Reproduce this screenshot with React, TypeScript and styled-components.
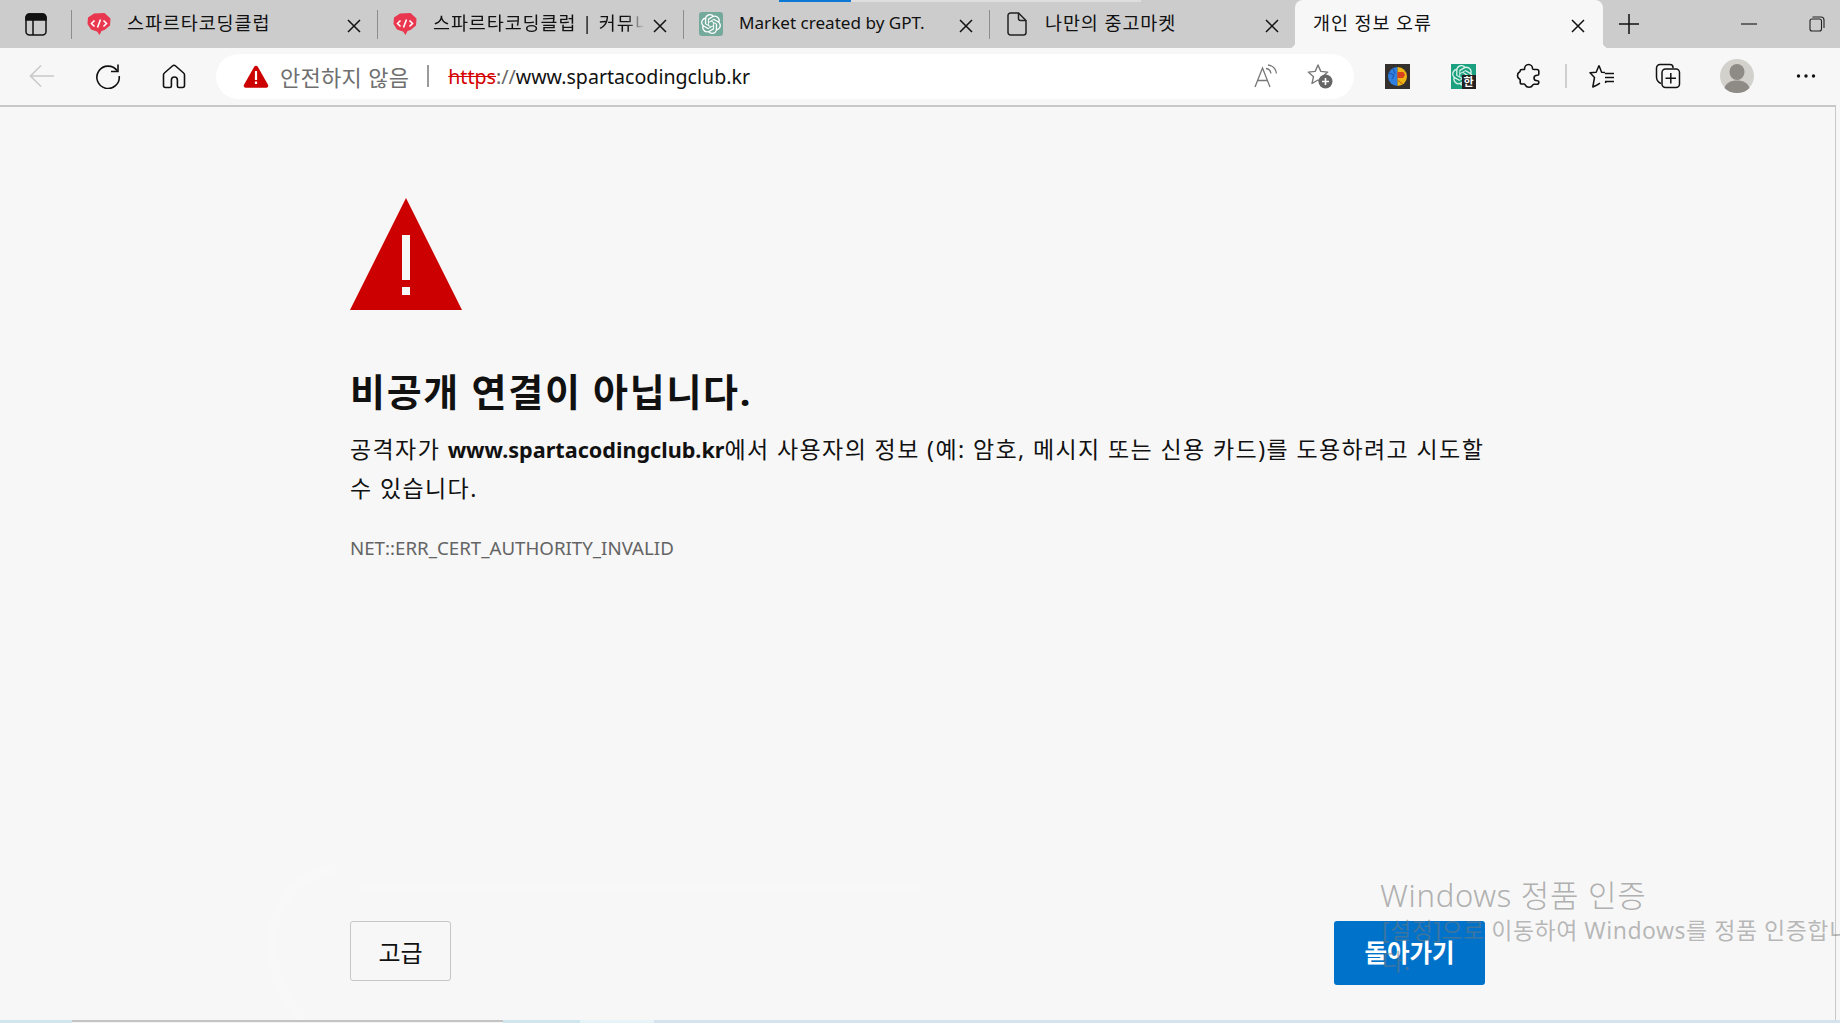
import styled, { createGlobalStyle } from 'styled-components';
import { SiOpenai } from 'react-icons/si';

const FONT = `"Noto Sans", "Noto Sans CJK KR", sans-serif`;

const GlobalStyle = createGlobalStyle`
    html, body {
        margin: 0;
        padding: 0;
        background: #f7f7f7;
    }
    * {
        box-sizing: border-box;
    }
`;

function CloseIcon() {
    return (
        <svg width="14" height="14" viewBox="0 0 14 14" fill="none" stroke="#111" strokeWidth="1.5">
            <path d="M1 1l12 12M13 1L1 13" />
        </svg>
    );
}

function SpartaIcon() {
    return (
        <svg width="26" height="24" viewBox="0 0 26 24">
            <path d="M8 1.5L18.500 1l6 5.500-.5 7-5.500 4.500-3 1-2 4-2.500-3.500-6-2L1.500 12 2 5.500z" fill="#e8374f" />
            <path d="M8.500 8.500l-3 3 3 3M17.500 8.500l3 3-3 3M14.500 7.500l-3 8" fill="none" stroke="#fff" strokeWidth="1.600" />
        </svg>
    );
}

function DocIcon() {
    return (
        <svg width="20" height="24" viewBox="0 0 20 24" fill="none" stroke="#222" strokeWidth="1.500">
            <path d="M3.500 1h8L19 8.500V20.500a2.500 2.500 0 0 1-2.500 2.500h-13A2.500 2.500 0 0 1 1 20.500v-17A2.500 2.500 0 0 1 3.500 1z" />
            <path d="M11.500 1v5.500a2 2 0 0 0 2 2H19" />
        </svg>
    );
}

function SidebarIcon() {
    return (
        <svg width="22" height="23" viewBox="0 0 22 23" fill="none" stroke="#111" strokeWidth="1.500">
            <rect x="1" y="1" width="20" height="21" rx="3.500" />
            <path d="M1 4.500a3.500 3.500 0 0 1 3.500-3.500h13A3.500 3.500 0 0 1 21 4.500V7H1z" fill="#111" />
            <path d="M8 7v15" />
        </svg>
    );
}

function PlusIcon() {
    return (
        <svg width="22" height="22" viewBox="0 0 22 22" fill="none" stroke="#111" strokeWidth="1.500">
            <path d="M11 1v20M1 11h20" />
        </svg>
    );
}

function MinimizeIcon() {
    return (
        <svg width="16" height="2" viewBox="0 0 16 2" fill="none" stroke="#222" strokeWidth="1.200">
            <path d="M0 1h16" />
        </svg>
    );
}

function RestoreIcon() {
    return (
        <svg width="16" height="16" viewBox="0 0 16 16" fill="none" stroke="#222" strokeWidth="1.100">
            <rect x="1" y="3" width="11.500" height="12" rx="2" />
            <path d="M3.500 1h8.500a3 3 0 0 1 3 3v8" />
        </svg>
    );
}

function BackIcon() {
    return (
        <svg width="26" height="24" viewBox="0 0 26 24" fill="none" stroke="#c9c9c9" strokeWidth="1.600">
            <path d="M25 12H2M12 1.500L1.500 12 12 22.500" />
        </svg>
    );
}

function ReloadIcon() {
    return (
        <svg width="26" height="26" viewBox="0 0 26 26" fill="none" stroke="#111" strokeWidth="1.600">
            <path d="M22.200 7.800A11.200 11.200 0 1 0 24.200 13" />
            <path d="M23 1.500V8.500H16" />
        </svg>
    );
}

function HomeIcon() {
    return (
        <svg width="24" height="25" viewBox="0 0 24 25" fill="none" stroke="#111" strokeWidth="1.600">
            <path d="M10.400 2a2.400 2.400 0 0 1 3.200 0l8 7a2.500 2.500 0 0 1 .9 1.900V21.500a2 2 0 0 1-2 2h-3.600a1.500 1.500 0 0 1-1.500-1.500v-6a3 3 0 0 0-6 0v6a1.500 1.500 0 0 1-1.500 1.500H3.500a2 2 0 0 1-2-2V10.900A2.500 2.500 0 0 1 2.400 9z" />
        </svg>
    );
}

function WarnIconSmall() {
    return (
        <svg width="26" height="23" viewBox="0 0 26 23">
            <path d="M11.200 1.800a2 2 0 0 1 3.600 0l10.200 18a2 2 0 0 1-1.800 3H2.800a2 2 0 0 1-1.800-3z" fill="#cc0000" />
            <path d="M11.900 6h2.200v9h-2.200zM11.900 16.500h2.200v2.500h-2.200z" fill="#fff" />
        </svg>
    );
}

function ReadAloudIcon() {
    return (
        <svg width="24" height="24" viewBox="0 0 24 24" fill="none" stroke="#777" strokeWidth="1.300">
            <path d="M1 23L8.500 4 16 23M3.500 16.500h10" />
            <path d="M12 4.500c2.500.3 4.600 2.200 5 5M14 1c4.500.5 7.800 3.800 8.500 8.500" />
        </svg>
    );
}

function StarPlusIcon() {
    return (
        <svg width="26" height="26" viewBox="0 0 26 26">
            <path d="M11 2l2.800 6.400 6.900.7-5.200 4.600 1.500 6.800-6-3.500-6 3.500 1.500-6.800L1.300 9.100l6.900-.7z" fill="none" stroke="#777" strokeWidth="1.400" strokeLinejoin="round" />
            <circle cx="18.500" cy="18.500" r="7" fill="#666" />
            <path d="M18.500 15v7M15 18.500h7" stroke="#fff" strokeWidth="1.600" />
        </svg>
    );
}

function BrainIcon() {
    return (
        <svg width="25" height="25" viewBox="0 0 25 25">
            <rect width="25" height="25" fill="#34302e" />
            <path d="M12.500 3a9.500 9.500 0 0 0 0 19z" fill="#2f7fe0" />
            <path d="M12.500 3a9.500 9.500 0 0 1 0 19z" fill="#f0b415" />
            <path d="M12.500 8h6l1.500 3-2 3h-5.500z" fill="#d9421f" />
            <path d="M4 9l5 2-2 4M8 4.500l2 5" fill="none" stroke="#1c4fa8" strokeWidth="1" />
            <path d="M12.500 16l5 4" stroke="#c87412" strokeWidth="1.200" />
        </svg>
    );
}

function PuzzleIcon() {
    return (
        <svg width="26" height="26" viewBox="0 0 26 26" fill="none" stroke="#111" strokeWidth="1.600" strokeLinejoin="round">
            <path d="M8.500 6.500C8.500 3.500 10 1.500 12.500 1.500s4 2 4 4c0 .6 1 1 1.500 1h3c1 0 1.800.8 1.800 1.800v3c0 .7-.8 1-1.500 1-1.800 0-3.300 1-3.300 2.700s1.500 2.700 3.300 2.700c.7 0 1.500.3 1.500 1v.5c0 1-.8 2-1.800 2H18c-.7 0-1.200.5-1.500 1.200-.5 1.200-2 1.800-3.500 1.800s-3-.6-3.500-1.800C9.200 21.500 8.700 21 8 21H6c-1 0-1.800-.8-1.800-1.800V17c0-.6-.5-1-1-1.300C2 15 1.500 14 1.500 12.500S2 10 3.200 9.300c.5-.3 1-.7 1-1.300 0-1 .8-1.500 1.800-1.500z" />
        </svg>
    );
}

function FavoritesIcon() {
    return (
        <svg width="26" height="25" viewBox="0 0 26 25" fill="none" stroke="#111" strokeWidth="1.500" strokeLinejoin="round">
            <path d="M10 1.500l2.600 6.700 3.400.3M8 21l-4.200 2 1.700-9.500L1 8.800l6.200-.6L10 1.500" />
            <path d="M16.500 17.500l.3 1.500M8 21l3-1.800" />
            <path d="M16 9.500h9M16 13.500h9M16 17.500h9" />
        </svg>
    );
}

function CollectionsIcon() {
    return (
        <svg width="26" height="26" viewBox="0 0 26 26" fill="none" stroke="#111" strokeWidth="1.500">
            <path d="M18 5V4.500A3 3 0 0 0 15 1.500H5A3.500 3.500 0 0 0 1.500 5v9a7 7 0 0 0 4.500 6.500" />
            <rect x="7" y="6" width="17.500" height="18.500" rx="3.500" />
            <path d="M15.800 10v10.500M10.500 15.200h10.500" />
        </svg>
    );
}

function AvatarIcon() {
    return (
        <svg width="34" height="34" viewBox="0 0 34 34">
            <circle cx="17" cy="17" r="17" fill="#d3d1cc" />
            <ellipse cx="17" cy="13" rx="7.500" ry="8" fill="#8e8a85" />
            <path d="M4.500 29c1.500-5 6-7.500 12.500-7.500S28 24 29.500 29A17 17 0 0 1 17 34 17 17 0 0 1 4.500 29z" fill="#8e8a85" />
        </svg>
    );
}

function MoreIcon() {
    return (
        <svg width="20" height="4" viewBox="0 0 20 4" fill="#111">
            <circle cx="2.500" cy="2" r="1.700" />
            <circle cx="10" cy="2" r="1.700" />
            <circle cx="17.500" cy="2" r="1.700" />
        </svg>
    );
}

function BigWarning() {
    return (
        <svg width="112" height="112" viewBox="0 0 112 112">
            <path d="M56 0l56 112H0z" fill="#cc0000" />
            <path d="M52 37h8v45h-8zM52 89h8v8h-8z" fill="#f7f7f7" />
        </svg>
    );
}

export default function App() {
    return (
        <>
            <GlobalStyle />
            <Screen>
                <TabStrip>
                    <LoadingTrack>
                        <LoadingBar />
                    </LoadingTrack>
                    <SideSlot>
                        <SidebarIcon />
                    </SideSlot>
                    <Separator />
                    <Tab>
                        <FaviconBox><SpartaIcon /></FaviconBox>
                        <TabTitle>스파르타코딩클럽</TabTitle>
                        <CloseBox><CloseIcon /></CloseBox>
                    </Tab>
                    <Separator />
                    <Tab>
                        <FaviconBox><SpartaIcon /></FaviconBox>
                        <TabTitle $fade>스파르타코딩클럽 | 커뮤니티</TabTitle>
                        <CloseBox><CloseIcon /></CloseBox>
                    </Tab>
                    <Separator />
                    <Tab>
                        <FaviconBox>
                            <GptFavicon><SiOpenai size={20} color="#fff" /></GptFavicon>
                        </FaviconBox>
                        <TabTitle $latin>Market created by GPT.</TabTitle>
                        <CloseBox><CloseIcon /></CloseBox>
                    </Tab>
                    <Separator />
                    <Tab>
                        <FaviconBox><DocIcon /></FaviconBox>
                        <TabTitle>나만의 중고마켓</TabTitle>
                        <CloseBox><CloseIcon /></CloseBox>
                    </Tab>
                    <ActiveTab>
                        <TabTitle>개인 정보 오류</TabTitle>
                        <CloseBox><CloseIcon /></CloseBox>
                    </ActiveTab>
                    <NewTabSlot><PlusIcon /></NewTabSlot>
                    <WindowControls>
                        <MinimizeIcon />
                        <RestoreIcon />
                    </WindowControls>
                </TabStrip>

                <Toolbar>
                    <ToolGroup>
                        <ToolButton><BackIcon /></ToolButton>
                        <ToolButton><ReloadIcon /></ToolButton>
                        <ToolButton><HomeIcon /></ToolButton>
                    </ToolGroup>
                    <AddressBar>
                        <WarnIconSmall />
                        <NotSecure>안전하지 않음</NotSecure>
                        <AddressDivider />
                        <Url>
                            <Scheme>https</Scheme>
                            <SchemeRest>://</SchemeRest>
                            www.spartacodingclub.kr
                        </Url>
                        <AddressActions>
                            <ReadAloudIcon />
                            <StarPlusIcon />
                        </AddressActions>
                    </AddressBar>
                    <ExtensionGroup>
                        <ToolButton><BrainIcon /></ToolButton>
                        <ToolButton>
                            <GptExtension>
                                <SiOpenai size={21} color="#d8f2e8" />
                                <HanBadge>한</HanBadge>
                            </GptExtension>
                        </ToolButton>
                        <ToolButton><PuzzleIcon /></ToolButton>
                    </ExtensionGroup>
                    <ToolDivider />
                    <ToolGroup>
                        <ToolButton><FavoritesIcon /></ToolButton>
                        <ToolButton><CollectionsIcon /></ToolButton>
                        <ToolButton $width={62}><AvatarIcon /></ToolButton>
                        <ToolButton><MoreIcon /></ToolButton>
                    </ToolGroup>
                </Toolbar>

                <Content>
                    <FaintShape viewBox="0 0 1840 160" fill="none" stroke="#f8f8f8" strokeWidth="10">
                        <path d="M335 8C292 18 272 48 272 84c0 30 12 56 32 76" />
                        <path d="M360 28h560" />
                    </FaintShape>
                    <BigWarning />
                    <Heading>비공개 연결이 아닙니다.</Heading>
                    <Message>
                        공격자가 <strong>www.spartacodingclub.kr</strong>에서 사용자의 정보 (예: 암호, 메시지 또는 신용 카드)를 도용하려고 시도할 수 있습니다.
                    </Message>
                    <ErrorCode>NET::ERR_CERT_AUTHORITY_INVALID</ErrorCode>
                    <ButtonRow>
                        <AdvancedButton>고급</AdvancedButton>
                        <BackButton>돌아가기</BackButton>
                    </ButtonRow>
                    <Watermark>
                        <WatermarkTitle>Windows 정품 인증</WatermarkTitle>
                        <WatermarkText>
                            [설정]으로 이동하여 Windows를 정품 인증합니다.
                        </WatermarkText>
                    </Watermark>
                </Content>

                <Taskbar>
                    <TaskSegment $width={72} />
                    <TaskSegment $width={431} $color="#f4f4f4" $edge />
                    <TaskSegment $width={77} />
                    <TaskSegment $width={74} $color="#e6f3f7" />
                    <TaskSegment $color="#d5e3f0" $grow />
                </Taskbar>
            </Screen>
        </>
    );
}

const Screen = styled.div`
    width: 1840px;
    height: 1023px;
    display: flex;
    flex-direction: column;
    overflow: hidden;
    background: #f7f7f7;
    font-family: ${FONT};
    color: #111;
`;

const TabStrip = styled.div`
    position: relative;
    height: 48px;
    flex: none;
    display: flex;
    align-items: center;
    background: #cccccc;
`;

const LoadingTrack = styled.div`
    position: absolute;
    top: 0;
    left: 779px;
    width: 362px;
    height: 2px;
    background: #dedede;
`;

const LoadingBar = styled.div`
    width: 72px;
    height: 100%;
    background: #0a78d4;
`;

const SideSlot = styled.div`
    width: 71px;
    padding-left: 25px;
    display: flex;
    align-items: center;
`;

const Separator = styled.div`
    width: 1px;
    height: 29px;
    flex: none;
    background: #8d8d8d;
`;

const Tab = styled.div`
    width: 305px;
    height: 100%;
    flex: none;
    display: flex;
    align-items: center;
    padding: 0 13px 0 14px;
`;

const ActiveTab = styled(Tab)`
    position: relative;
    width: 308px;
    padding: 0 15px 0 18px;
    background: #f7f7f7;
    border-radius: 8px 8px 0 0;

    &::before,
    &::after {
        content: '';
        position: absolute;
        bottom: 0;
        width: 6px;
        height: 6px;
    }
    &::before {
        left: -6px;
        background: radial-gradient(circle at 0 0, #cccccc 6px, #f7f7f7 6.5px);
    }
    &::after {
        right: -6px;
        background: radial-gradient(circle at 100% 0, #cccccc 6px, #f7f7f7 6.5px);
    }
`;

const FaviconBox = styled.div`
    width: 26px;
    height: 26px;
    flex: none;
    margin-right: 15px;
    display: flex;
    align-items: center;
    justify-content: center;
`;

const GptFavicon = styled.div`
    width: 24px;
    height: 24px;
    display: flex;
    align-items: center;
    justify-content: center;
    background: #74aa9c;
    border-radius: 3px;
`;

const TabTitle = styled.span<{ $fade?: boolean; $latin?: boolean }>`
    flex: 1;
    min-width: 0;
    margin-top: -2px;
    font-size: ${props => (props.$latin ? '17.1px' : '18.5px')};
    letter-spacing: ${props => (props.$latin ? '0' : '0.9px')};
    line-height: 24px;
    white-space: nowrap;
    overflow: hidden;
    color: #111;
    ${props => props.$fade && 'mask-image: linear-gradient(to right, #000 92%, transparent 100%);'}
`;

const CloseBox = styled.div`
    width: 20px;
    flex: none;
    margin-left: 6px;
    padding-top: 3px;
    display: flex;
    align-items: center;
    justify-content: center;
`;

const NewTabSlot = styled.div`
    width: 50px;
    padding-left: 15px;
    display: flex;
    align-items: center;
`;

const WindowControls = styled.div`
    margin-left: 88px;
    width: 84px;
    display: flex;
    align-items: center;
    justify-content: space-between;
`;

const Toolbar = styled.div`
    height: 57px;
    flex: none;
    display: flex;
    align-items: center;
    padding: 0 0 1px 14px;
    background: #f7f7f7;
`;

const ToolGroup = styled.div`
    display: flex;
    gap: 10px;
`;

const ExtensionGroup = styled(ToolGroup)`
    margin-left: 15px;
`;

const ToolButton = styled.div<{ $width?: number }>`
    width: ${props => props.$width ?? 56}px;
    height: 44px;
    flex: none;
    display: flex;
    align-items: center;
    justify-content: center;
`;

const AddressBar = styled.div`
    width: 1138px;
    height: 45px;
    margin-left: 14px;
    padding: 0 21px 0 27px;
    flex: none;
    display: flex;
    align-items: center;
    background: #fff;
    border-radius: 23px;
`;

const NotSecure = styled.span`
    margin-left: 11px;
    font-size: 22px;
    letter-spacing: 0.3px;
    color: #6f6f6f;
    white-space: nowrap;
`;

const AddressDivider = styled.div`
    width: 2px;
    height: 22px;
    margin: 0 19px 0 18px;
    background: #9a9a9a;
`;

const Url = styled.span`
    flex: 1;
    font-size: 19.6px;
    white-space: nowrap;
    color: #111;
`;

const Scheme = styled.span`
    color: #d40000;
    text-decoration: line-through;
`;

const SchemeRest = styled.span`
    color: #666;
`;

const AddressActions = styled.div`
    display: flex;
    align-items: center;
    gap: 29px;
`;

const GptExtension = styled.div`
    position: relative;
    width: 25px;
    height: 25px;
    display: flex;
    padding: 1px;
    background: #1ba17f;
`;

const HanBadge = styled.span`
    position: absolute;
    right: 0;
    bottom: 0;
    width: 14px;
    height: 14px;
    background: #222;
    color: #fff;
    font-size: 11px;
    font-weight: 700;
    line-height: 14px;
    text-align: center;
`;

const ToolDivider = styled.div`
    width: 2px;
    height: 24px;
    flex: none;
    margin: 0 7px 0 8px;
    background: #cfcfcf;
`;

const Content = styled.main`
    position: relative;
    flex: 1;
    min-height: 0;
    margin-right: 4px;
    padding: 91px 350px 35px 350px;
    display: flex;
    flex-direction: column;
    background: #f7f7f7;
    border-top: 2px solid #c8c8c8;
    border-right: 1px solid #c8c8c8;
`;

const FaintShape = styled.svg`
    position: absolute;
    left: 0;
    bottom: 0;
    width: 1840px;
    height: 160px;
    pointer-events: none;
`;

const Heading = styled.h1`
    margin: 56px 0 0;
    font-size: 38px;
    font-weight: 700;
    letter-spacing: 1.7px;
    line-height: 50px;
    color: #111;
`;

const Message = styled.p`
    margin: 14px 0 0;
    font-size: 23px;
    letter-spacing: 1.4px;
    line-height: 38px;
    color: #111;

    strong {
        font-size: 21.6px;
        font-weight: 700;
        letter-spacing: 0;
    }
`;

const ErrorCode = styled.div`
    margin-top: 27px;
    font-size: 18.7px;
    line-height: 28px;
    color: #646464;
`;

const ButtonRow = styled.div`
    position: relative;
    margin-top: auto;
    display: flex;
    align-items: flex-start;
    justify-content: space-between;
`;

const AdvancedButton = styled.button`
    width: 101px;
    height: 60px;
    padding: 0;
    background: transparent;
    border: 1px solid #c6c6c6;
    border-radius: 3px;
    font-family: ${FONT};
    font-size: 24px;
    color: #111;
`;

const BackButton = styled.button`
    width: 151px;
    height: 64px;
    padding: 0 0 4px;
    background: #0072c9;
    border: none;
    border-radius: 3px;
    font-family: ${FONT};
    font-size: 24.5px;
    font-weight: 700;
    color: #fff;
`;

const Watermark = styled.div`
    position: absolute;
    left: 1380px;
    top: 767px;
    width: 456px;
    pointer-events: none;
`;

const WatermarkTitle = styled.div`
    font-size: 31px;
    letter-spacing: 0.7px;
    line-height: 42px;
    font-weight: 300;
    color: #b0b0b0;
    white-space: nowrap;
`;

const WatermarkText = styled.div`
    width: 476px;
    margin-top: -1px;
    padding-left: 2px;
    font-size: 23px;
    letter-spacing: 0.5px;
    line-height: 31px;
    color: rgba(120, 120, 120, 0.5);
    word-break: break-all;
`;

const Taskbar = styled.div`
    height: 3px;
    flex: none;
    display: flex;
`;

const TaskSegment = styled.div<{ $width?: number; $color?: string; $edge?: boolean; $grow?: boolean }>`
    width: ${props => (props.$width ? `${props.$width}px` : 'auto')};
    flex: ${props => (props.$grow ? 1 : 'none')};
    background: ${props => props.$color ?? '#cfe6ee'};
    ${props => props.$edge && 'border-top: 2px solid #c4c4c4;'}
`;
